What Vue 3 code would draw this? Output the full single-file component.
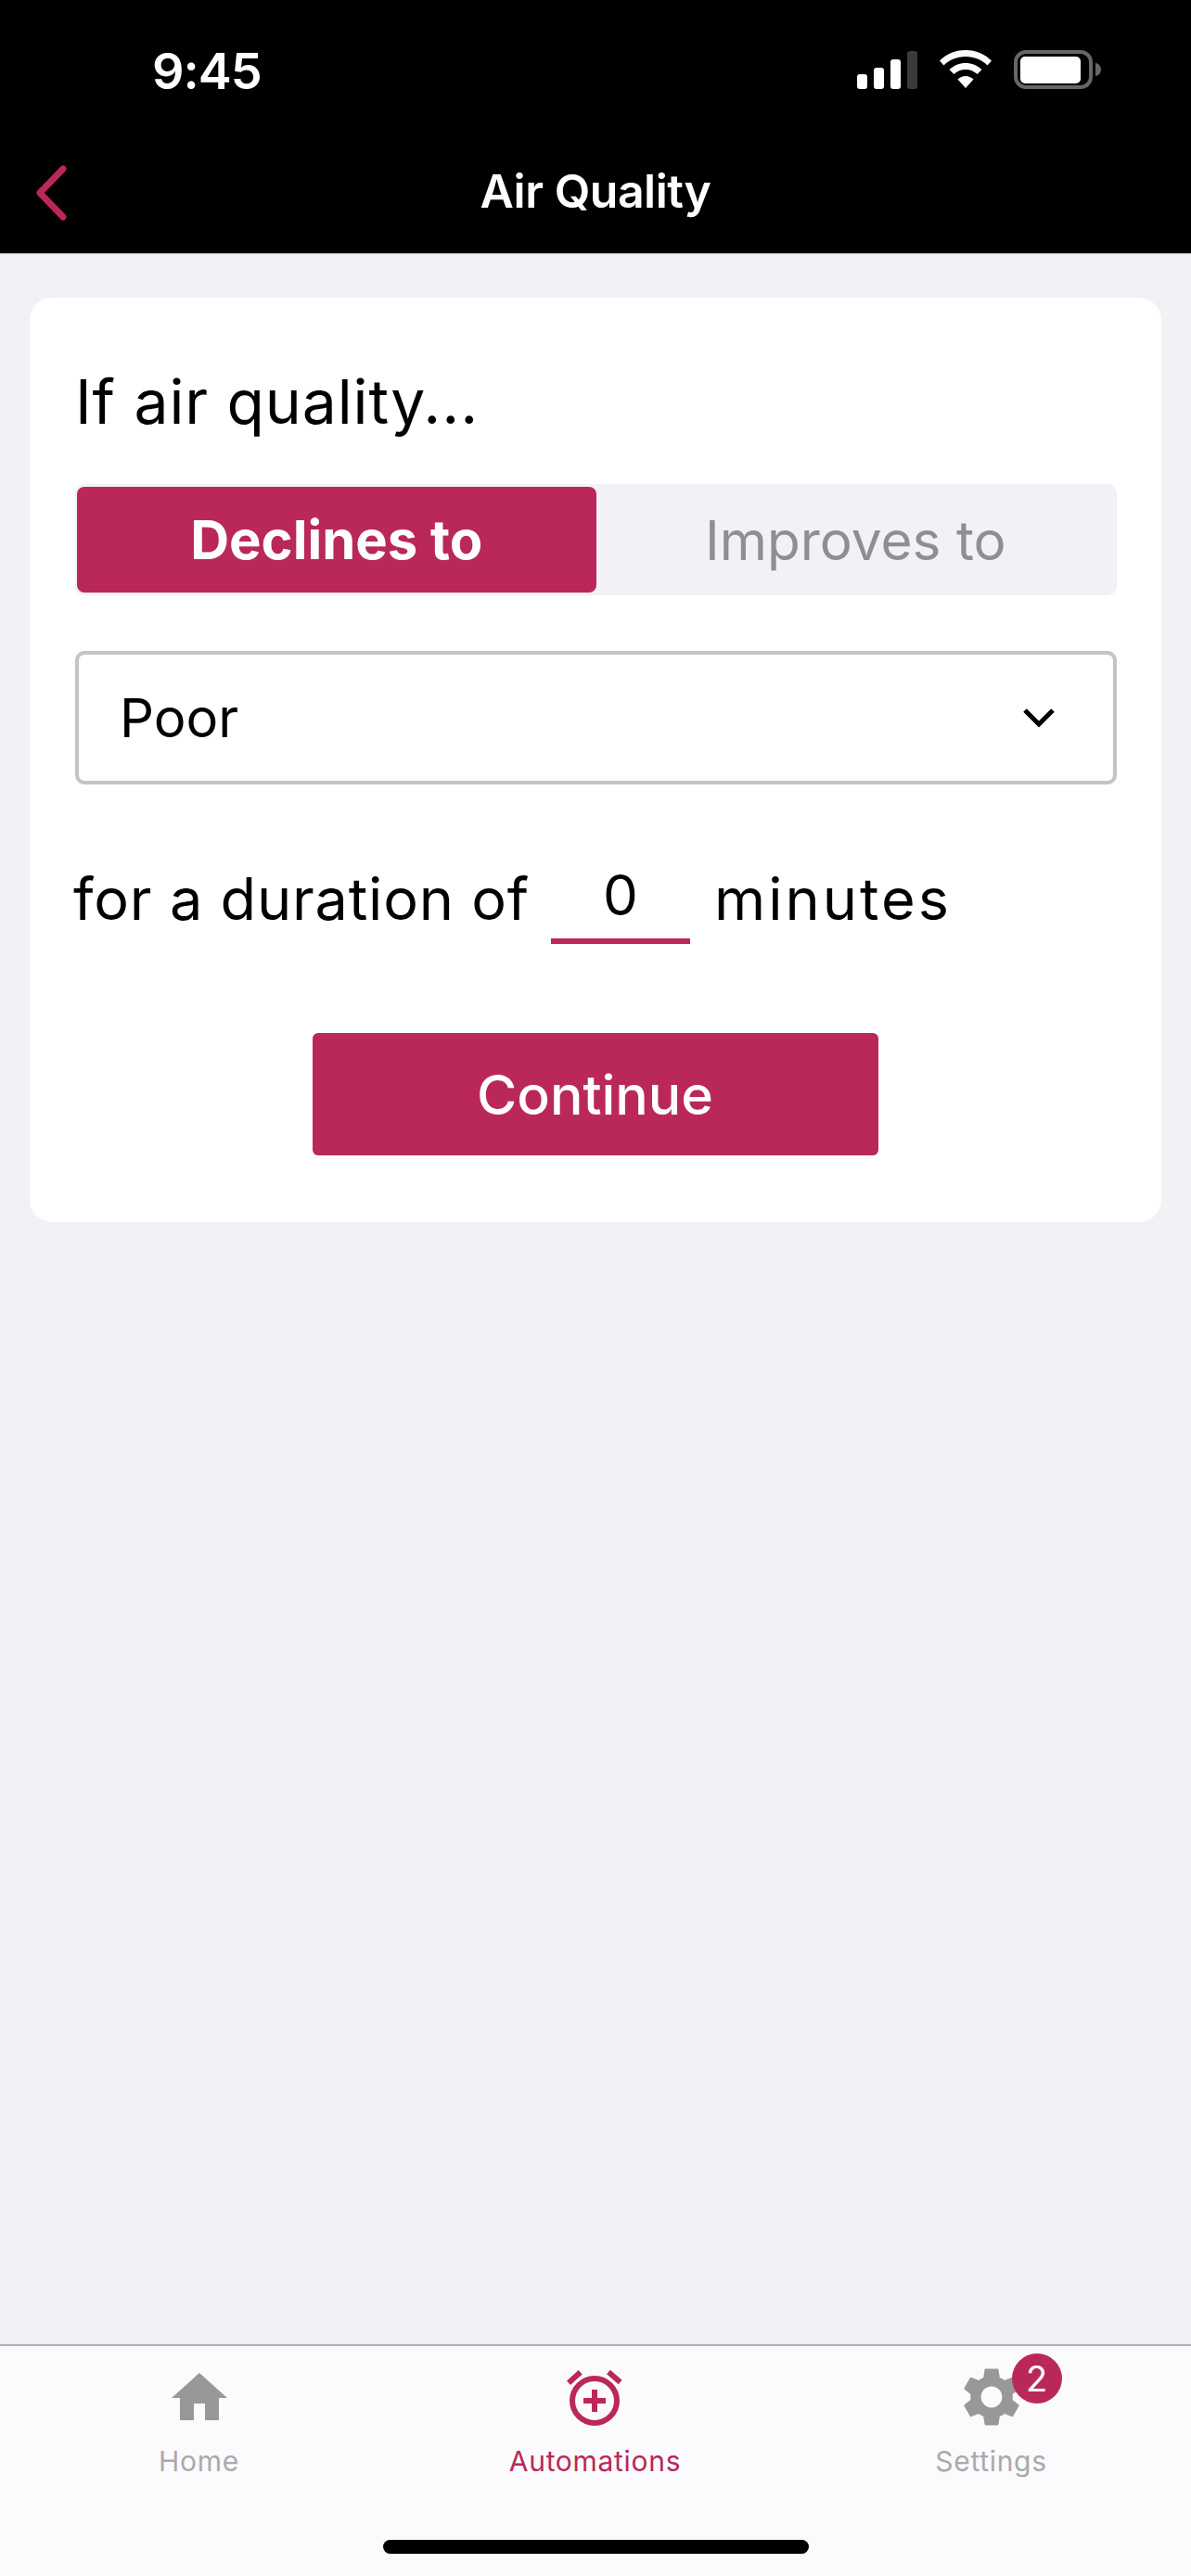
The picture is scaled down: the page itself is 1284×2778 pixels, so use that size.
<script setup>
const tabs = [
  { name: 'Home' },
  { name: 'Automations', active: true },
  { name: 'Settings', badge: 2 },
]
</script>

<template>
  <div class="screen">
    <header class="header">
      <div class="status">
        <span class="time">9:45</span>
        <div class="status-icons">
          <svg class="signal" width="65" height="42" viewBox="0 0 65 42">
            <rect x="0" y="26" width="11" height="16" rx="3" fill="#fff" />
            <rect x="18" y="19" width="11" height="23" rx="3" fill="#fff" />
            <rect x="36" y="10" width="11" height="32" rx="3" fill="#fff" />
            <rect x="54" y="1" width="11" height="41" rx="3" fill="#3a3a3a" />
          </svg>
          <svg class="wifi" width="58" height="42" viewBox="0 0 58 42">
            <path d="M29 0C18 0 8.500 4.200 1 11.500L5.500 16.500C11.500 10.500 19.800 7 29 7S46.500 10.500 52.500 16.500L57 11.500C49.500 4.200 40 0 29 0Z" fill="#fff" />
            <path d="M29 14C22.500 14 16.500 16.500 11.500 21L16.300 26C19.800 22.900 24.200 21 29 21S38.200 22.900 41.700 26L46.500 21C41.500 16.500 35.500 14 29 14Z" fill="#fff" />
            <path d="M29 28C25.800 28 23 29.200 20.500 31.500L29 41L37.500 31.500C35 29.200 32.200 28 29 28Z" fill="#fff" />
          </svg>
          <svg class="battery" width="94" height="42" viewBox="0 0 94 42">
            <rect x="2" y="2" width="81" height="38" rx="11" fill="none" stroke="#666" stroke-width="4" />
            <rect x="7" y="7" width="65" height="29" rx="5" fill="#fff" />
            <path d="M88 14C91.500 14.500 94 17.500 94 21S91.500 27.500 88 28Z" fill="#666" />
          </svg>
        </div>
      </div>
      <div class="nav">
        <svg class="back" width="40" height="60" viewBox="0 0 40 60">
          <path d="M32 4L7 30L32 56" fill="none" stroke="#ba2859" stroke-width="7" stroke-linecap="round" stroke-linejoin="round" />
        </svg>
        <span class="nav-title">Air Quality</span>
      </div>
    </header>

    <main class="content">
      <section class="card">
        <h1 class="title">If air quality...</h1>
        <div class="toggle">
          <div class="toggle-btn on">Declines to</div>
          <div class="toggle-btn">Improves to</div>
        </div>
        <div class="select">
          <span>Poor</span>
          <svg width="36" height="22" viewBox="0 0 36 22">
            <path d="M3 3L18 18L33 3" fill="none" stroke="#000" stroke-width="5" />
          </svg>
        </div>
        <div class="duration">
          <span class="text">for a duration of</span>
          <span class="value">0</span>
          <span class="text minutes">minutes</span>
        </div>
        <button class="continue" type="button">Continue</button>
      </section>
    </main>

    <footer class="tabbar">
      <div class="tabs">
        <div v-for="tab in tabs" :key="tab.name" class="tab" :class="{ active: tab.active }">
          <div class="tab-icon">
            <svg v-if="tab.name === 'Home'" width="76" height="76" viewBox="0 0 76 76">
              <path d="M38 12L8 39H17V63H32V45H44V63H59V39H68Z" fill="#98989a" />
            </svg>
            <svg v-else-if="tab.name === 'Automations'" width="76" height="76" viewBox="0 0 76 76">
              <circle cx="37" cy="42" r="24" fill="none" stroke="#ba2859" stroke-width="6" />
              <path d="M25 42H49M37 30V54" fill="none" stroke="#ba2859" stroke-width="6" />
              <path d="M9 22.700L21.700 11.300M52 11L64.700 22" fill="none" stroke="#ba2859" stroke-width="6" />
            </svg>
            <svg v-else width="76" height="76" viewBox="0 0 24 24">
              <path d="M19.140 12.940c.04-.3.06-.61.06-.94 0-.32-.02-.64-.07-.94l2.030-1.580c.18-.14.23-.41.12-.61l-1.920-3.320c-.12-.22-.37-.29-.59-.22l-2.390.96c-.5-.38-1.030-.7-1.620-.94l-.36-2.540c-.04-.24-.24-.41-.48-.41h-3.840c-.24 0-.43.17-.47.41l-.36 2.540c-.59.24-1.130.57-1.620.94l-2.390-.96c-.22-.08-.47 0-.59.22L2.740 8.870c-.12.21-.08.47.12.61l2.030 1.580c-.05.3-.09.63-.09.94s.02.64.07.94l-2.030 1.580c-.18.14-.23.41-.12.61l1.920 3.320c.12.22.37.29.59.22l2.390-.96c.5.38 1.030.7 1.620.94l.36 2.540c.05.24.24.41.48.41h3.840c.24 0 .44-.17.47-.41l.36-2.540c.59-.24 1.130-.56 1.620-.94l2.390.96c.22.08.47 0 .59-.22l1.920-3.320c.12-.22.07-.47-.12-.61l-2.010-1.580zM12 15.600c-1.980 0-3.600-1.620-3.600-3.600s1.620-3.600 3.600-3.600 3.600 1.620 3.600 3.600-1.620 3.600-3.600 3.600z" fill="#98989a" />
            </svg>
            <span v-if="tab.badge" class="badge">{{ tab.badge }}</span>
          </div>
          <span class="tab-label">{{ tab.name }}</span>
        </div>
      </div>
      <div class="home-bar"></div>
    </footer>
  </div>
</template>

<style scoped>
.screen {
  display: flex;
  flex-direction: column;
  width: 1284px;
  height: 2778px;
  background: #f1f1f6;
  font-family: Inter, "Noto Sans", sans-serif;
  overflow: hidden;
}

.header {
  height: 274px;
  background: #000;
  border-bottom: 1px solid #b8b8bc;
  box-sizing: border-box;
  color: #fff;
}

.status {
  display: flex;
  justify-content: space-between;
  align-items: center;
  height: 42px;
  padding: 54px 97px 0 164px;
}

.time {
  margin-top: 3px;
  font-size: 54px;
  font-weight: 600;
  letter-spacing: -1px;
}

.status-icons {
  display: flex;
  gap: 23px;
}

.nav {
  position: relative;
  display: flex;
  justify-content: center;
  align-items: center;
  height: 70px;
  margin-top: 75px;
}

.back {
  position: absolute;
  left: 36px;
  top: 7px;
}

.nav-title {
  font-size: 50px;
  font-weight: 600;
  letter-spacing: -0.5px;
}

.content {
  flex: 1;
  padding: 47px 32px 0;
}

.card {
  display: flex;
  flex-direction: column;
  height: 997px;
  box-sizing: border-box;
  padding: 76px 48px 0 49px;
  background: #fff;
  border-radius: 24px;
  color: #000;
}

.title {
  margin: 0;
  font-size: 66px;
  font-weight: 400;
  line-height: 72px;
  letter-spacing: 0.9px;
}

.toggle {
  display: flex;
  height: 120px;
  margin-top: 53px;
  padding: 3px 2px;
  box-sizing: border-box;
  background: #f1f1f6;
  border-radius: 10px;
}

.toggle-btn {
  flex: 1;
  display: flex;
  justify-content: center;
  align-items: center;
  font-size: 58.500px;
  color: #8e8e93;
}

.toggle-btn.on {
  background: #ba2859;
  border-radius: 8px;
  color: #fff;
  font-size: 58px;
  font-weight: 700;
}

.select {
  display: flex;
  justify-content: space-between;
  align-items: center;
  height: 144px;
  margin-top: 60px;
  padding: 0 62px 0 44px;
  box-sizing: border-box;
  border: 4px solid #c4c4c4;
  border-radius: 10px;
  font-size: 58px;
}

.duration {
  display: flex;
  align-items: flex-end;
  margin-top: 89px;
  margin-left: -2px;
}

.text {
  padding-bottom: 17px;
  font-size: 63px;
  line-height: 64px;
  letter-spacing: 0.800px;
}

.minutes {
  letter-spacing: 3px;
}

.value {
  width: 150px;
  margin: 0 26px 0 23px;
  padding-bottom: 17px;
  border-bottom: 6px solid #ba2859;
  font-size: 60px;
  line-height: 60px;
  text-align: center;
}

.continue {
  align-self: center;
  width: 610px;
  height: 132px;
  margin-top: 96px;
  margin-left: -2px;
  border: none;
  border-radius: 6px;
  background: #ba2859;
  color: #fff;
  font-family: inherit;
  font-size: 59px;
  font-weight: 500;
}

.tabbar {
  position: relative;
  height: 250px;
  box-sizing: border-box;
  border-top: 2px solid #b0b0b4;
  background: #fbfbfd;
}

.tabs {
  display: grid;
  grid-template-columns: repeat(3, 1fr);
  padding: 17px 2px 0 1px;
}

.tab {
  display: flex;
  flex-direction: column;
  align-items: center;
  color: #a9a9ad;
}

.tab.active {
  color: #ba2859;
}

.tab-icon {
  position: relative;
  width: 76px;
  height: 76px;
}

.tab-label {
  margin-top: 13px;
  font-size: 30px;
  line-height: 36px;
  letter-spacing: 0.700px;
}

.badge {
  position: absolute;
  left: 60px;
  top: -9px;
  width: 54px;
  height: 54px;
  border-radius: 50%;
  background: #ba2859;
  color: #fff;
  font-size: 38px;
  line-height: 54px;
  text-align: center;
}

.home-bar {
  position: absolute;
  left: 413px;
  bottom: 24px;
  width: 459px;
  height: 15px;
  border-radius: 8px;
  background: #000;
}
</style>
